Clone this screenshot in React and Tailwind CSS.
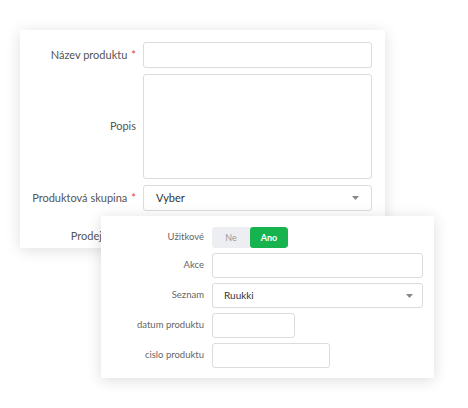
import React from 'react';

function Row({ label, required, children, className = '' }) {
  return (
    <div className={`flex items-center ${className}`}>
      <label className="w-[119px] shrink-0 pr-[7px] text-right text-[#555]">
        {label}
        {required && <span className="ml-[4px] text-[#e53935]">*</span>}
      </label>
      {children}
    </div>
  );
}

function Row2({ label, children }) {
  return (
    <div className="flex items-center">
      <label className="w-[111px] shrink-0 pr-[8px] text-right text-[#666]">{label}</label>
      {children}
    </div>
  );
}

function Caret({ right = 'right-[12px]' }) {
  return (
    <svg width="7" height="4" viewBox="0 0 7 4" className={`absolute ${right} top-1/2 -translate-y-1/2`}>
      <path d="M0 0h7L3.5 4z" fill="#888" />
    </svg>
  );
}

export default function App() {
  return (
    <div className="min-h-[408px] w-[468px] bg-white pt-[30px] text-[11px]" style={{ fontFamily: 'Lato, "Open Sans", sans-serif' }}>
      {/* Karta 1 */}
      <div className="ml-[20px] flex h-[218px] w-[365px] flex-col gap-[6px] bg-white pl-[4px] pr-[13px] pt-[12px] shadow-[0_2px_14px_rgba(0,0,0,0.13)]">
        <Row label="Název produktu" required>
          <div className="h-[26px] flex-1 rounded-[3px] border border-[#dcdcdc] bg-white" />
        </Row>
        <Row label="Popis">
          <div className="h-[105px] flex-1 rounded-[3px] border border-[#dcdcdc] bg-white" />
        </Row>
        <Row label="Produktová skupina" required>
          <div className="relative flex h-[26px] flex-1 items-center rounded-[3px] border border-[#dcdcdc] bg-white pl-[12px] text-[#333]">
            Vyber
            <Caret />
          </div>
        </Row>
        <Row label="Prodejní cena" className="mt-[6px]">
          <div className="h-[26px] flex-1" />
        </Row>
      </div>

      {/* Karta 2 */}
      <div className="relative z-10 -mt-[32px] ml-[101px] flex h-[162px] w-[333px] flex-col gap-[5px] bg-white pr-[11px] pt-[11px] text-[9.5px] shadow-[0_2px_14px_rgba(0,0,0,0.14)]">
        <Row2 label="Užitkové">
          <div className="flex h-[21px] overflow-hidden rounded-[3px]">
            <div className="flex w-[38px] items-center justify-center bg-[#eceef1] text-[9px] text-[#999]">Ne</div>
            <div className="flex w-[38px] items-center justify-center rounded-[3px] bg-[#17b34f] text-[9px] font-bold text-white">Ano</div>
          </div>
        </Row2>
        <Row2 label="Akce">
          <div className="h-[25px] flex-1 rounded-[3px] border border-[#dcdcdc]" />
        </Row2>
        <Row2 label="Seznam">
          <div className="relative flex h-[25px] flex-1 items-center rounded-[3px] border border-[#dcdcdc] pl-[11px] text-[10px] text-[#333]">
            Ruukki
            <Caret right="right-[9px]" />
          </div>
        </Row2>
        <Row2 label="datum produktu">
          <div className="h-[25px] w-[83px] rounded-[3px] border border-[#dcdcdc]" />
        </Row2>
        <Row2 label="cislo produktu">
          <div className="h-[25px] w-[118px] rounded-[3px] border border-[#dcdcdc]" />
        </Row2>
      </div>
    </div>
  );
}
